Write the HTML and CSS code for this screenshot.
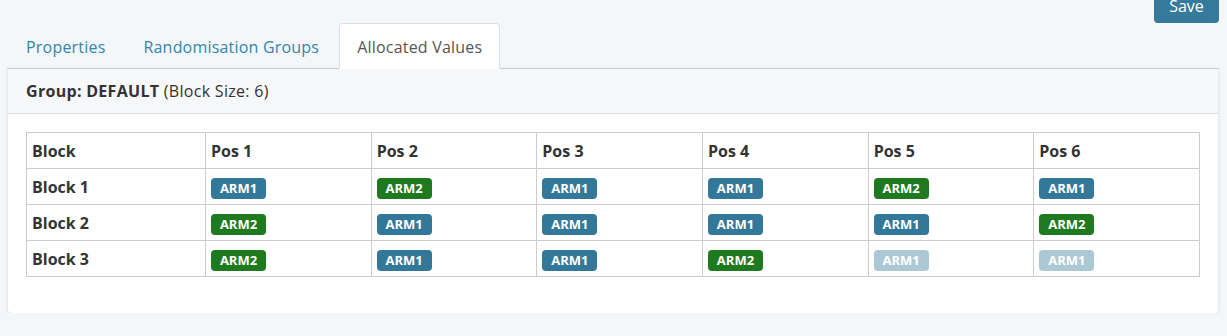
FILE: index.html
```html
<!DOCTYPE html>
<html>
<head>
<meta charset="utf-8">
<link rel="stylesheet" href="styles.css">
</head>
<body>
<div class="topbar">
  <button class="btn-save">Save</button>
</div>
<ul class="tabs">
  <li class="tab"><a>Properties</a></li>
  <li class="tab"><a>Randomisation Groups</a></li>
  <li class="tab active"><a>Allocated Values</a></li>
</ul>
<div class="panel">
  <div class="panel-head"><b>Group: DEFAULT</b> (Block Size: 6)</div>
  <div class="panel-body">
    <table class="grid">
      <colgroup><col class="c-first"><col><col><col><col><col><col></colgroup>
      <thead>
        <tr><th>Block</th><th>Pos 1</th><th>Pos 2</th><th>Pos 3</th><th>Pos 4</th><th>Pos 5</th><th>Pos 6</th></tr>
      </thead>
      <tbody>
        <tr><th>Block 1</th>
          <td><span class="badge arm1">ARM1</span></td>
          <td><span class="badge arm2">ARM2</span></td>
          <td><span class="badge arm1">ARM1</span></td>
          <td><span class="badge arm1">ARM1</span></td>
          <td><span class="badge arm2">ARM2</span></td>
          <td><span class="badge arm1">ARM1</span></td></tr>
        <tr><th>Block 2</th>
          <td><span class="badge arm2">ARM2</span></td>
          <td><span class="badge arm1">ARM1</span></td>
          <td><span class="badge arm1">ARM1</span></td>
          <td><span class="badge arm1">ARM1</span></td>
          <td><span class="badge arm1">ARM1</span></td>
          <td><span class="badge arm2">ARM2</span></td></tr>
        <tr><th>Block 3</th>
          <td><span class="badge arm2">ARM2</span></td>
          <td><span class="badge arm1">ARM1</span></td>
          <td><span class="badge arm1">ARM1</span></td>
          <td><span class="badge arm2">ARM2</span></td>
          <td><span class="badge arm1 faded">ARM1</span></td>
          <td><span class="badge arm1 faded">ARM1</span></td></tr>
      </tbody>
    </table>
  </div>
</div>
</body>
</html>
```
FILE: styles.css
```css
* { box-sizing: border-box; }
html, body { margin: 0; padding: 0; }
body {
  background: #f3f7fa;
  font-family: "Open Sans", "Noto Sans", sans-serif;
  font-size: 16px;
  color: #333;
}
.topbar {
  height: 23px;
  display: flex;
  justify-content: flex-end;
  padding-right: 8px;
}
.btn-save {
  margin-top: -12px;
  height: 35px;
  width: 65px;
  border: 0;
  border-radius: 4px;
  background: #35799b;
  color: #fff;
  font-family: inherit;
  font-size: 16px;
  padding: 0;
}
.tabs {
  list-style: none;
  display: flex;
  border-bottom: 1px solid #cfd3d6;
  margin: 0 8px 0 7px;
  padding: 0 0 0 1px;
}
.tab {
  margin-right: 2px;
  margin-bottom: -1px;
}
.tab a {
  display: block;
  padding: 11px 17px 9px;
  line-height: 24px;
  font-size: 16px;
  letter-spacing: 0.2px;
  color: #3585ab;
  border: 1px solid transparent;
  border-radius: 4px 4px 0 0;
}
.tab.active a {
  background: #fff;
  color: #555;
  border-color: #dcdfe2;
  border-bottom-color: #fff;
}
.panel {
  margin: 0 9px 0 8px;
  background: #fff;
  border-radius: 0 0 4px 4px;
  box-shadow: 0 1px 4px rgba(0, 0, 0, 0.12);
}
.panel-head {
  background: #f7f8fa;
  border-bottom: 1px solid #dcdfe2;
  padding: 10px 18px;
  line-height: 24px;
  font-size: 16px;
  letter-spacing: 0.3px;
  color: #333;
}
.panel-body {
  padding: 18px 18px 36px;
}
.grid {
  width: 100%;
  border-collapse: collapse;
  table-layout: fixed;
}
.c-first { width: 179px; }
.grid th, .grid td {
  border: 1px solid #cccccc;
  height: 36px;
  padding: 0 5px;
  text-align: left;
  vertical-align: middle;
}
.grid th {
  font-weight: 700;
  font-size: 16px;
  color: #333;
}
.badge {
  display: inline-block;
  width: 55px;
  text-align: center;
  height: 21px;
  line-height: 21px;
  border-radius: 4px;
  color: #fff;
  font-weight: 700;
  font-size: 13px;
  margin-top: 3px;
}
.arm1 { background: #347899; }
.arm2 { background: #1f7a1f; }
.faded { opacity: 0.4; }
```
